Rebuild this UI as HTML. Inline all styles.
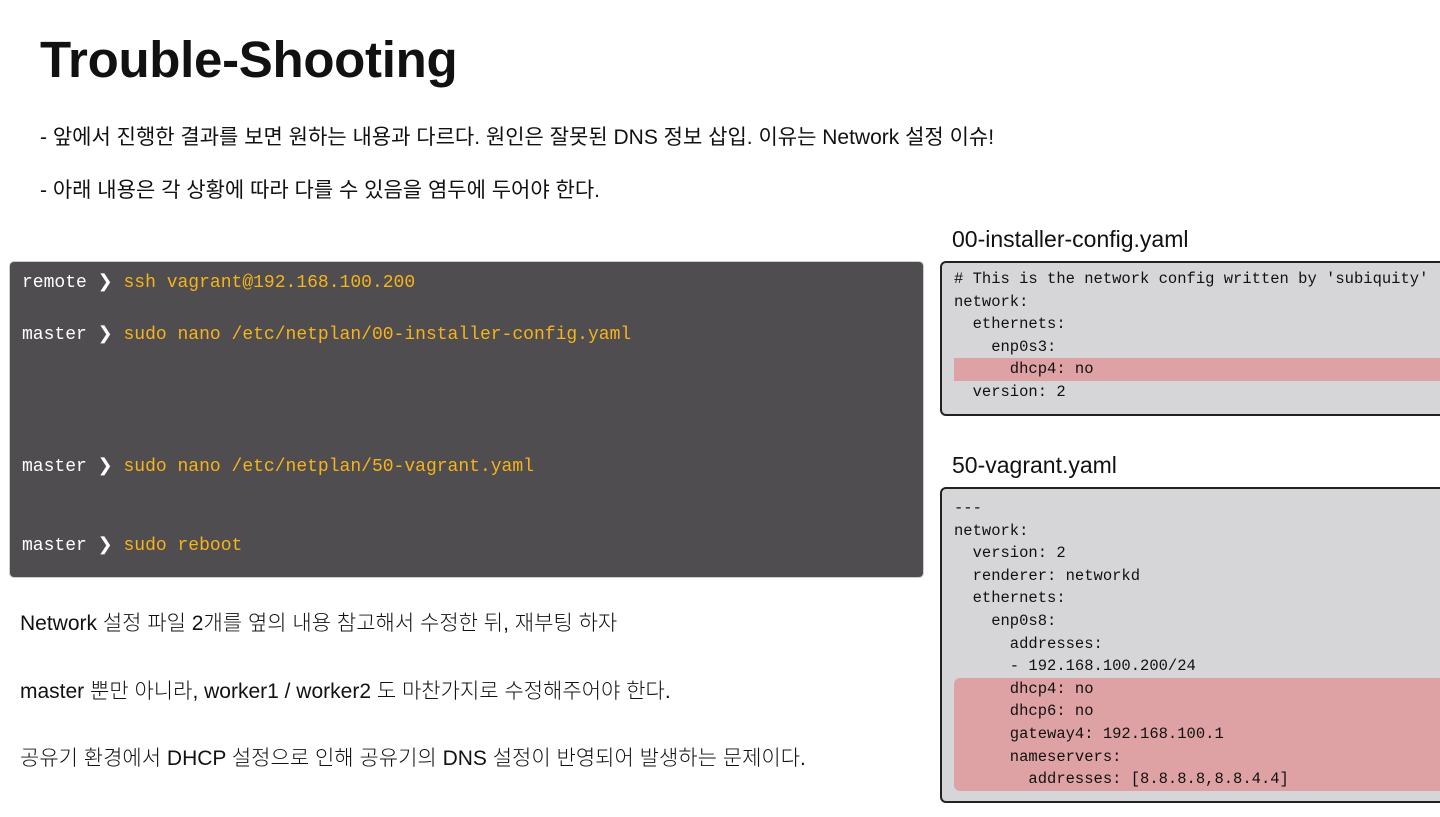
<!DOCTYPE html>
<html><head><meta charset="utf-8"><style>
body{margin:0;width:1440px;height:817px;background:#fff;position:relative;overflow:hidden;font-family:"Liberation Sans","Noto Sans CJK KR",sans-serif;color:#111}
.a{position:absolute;white-space:nowrap}
h1{position:absolute;left:40px;top:30px;margin:0;font-size:51px;font-weight:bold;letter-spacing:-0.3px}
.b{font-size:21px}
.term{position:absolute;left:9px;top:261px;width:913px;height:315px;background:#4f4d50;border-radius:5px;border:1px solid #ccc}
.t{position:absolute;left:12px;font-family:"Liberation Mono",monospace;font-size:18px;color:#fff;white-space:pre}
.t span{color:#f5b31c}
.code{position:absolute;left:940px;background:#d6d6d8;border:2px solid #222;border-radius:6px;width:520px;font-family:"Liberation Mono","DejaVu Sans Mono",monospace;font-size:15.5px;color:#111}
.code div{height:22.6px;line-height:22.6px;padding-left:12px;white-space:pre}
.code div.h{background:#dfa2a4;margin-left:12px;padding-left:0}
.hw{font-family:"Liberation Sans","Noto Sans CJK KR",sans-serif;font-size:21px;font-weight:300}
</style></head><body>
<h1>Trouble-Shooting</h1>
<div class="a b" style="left:40px;top:121px">- 앞에서 진행한 결과를 보면 원하는 내용과 다르다. 원인은 잘못된 DNS 정보 삽입. 이유는 Network 설정 이슈!</div>
<div class="a b" style="left:40px;top:174px">- 아래 내용은 각 상황에 따라 다를 수 있음을 염두에 두어야 한다.</div>
<div class="term">
<div class="t" style="top:9px">remote ❯ <span>ssh vagrant@192.168.100.200</span></div>
<div class="t" style="top:61px">master ❯ <span>sudo nano /etc/netplan/00-installer-config.yaml</span></div>
<div class="t" style="top:193px">master ❯ <span>sudo nano /etc/netplan/50-vagrant.yaml</span></div>
<div class="t" style="top:272px">master ❯ <span>sudo reboot</span></div>
</div>
<div class="a hw" style="left:952px;top:226px;font-size:23px">00-installer-config.yaml</div>
<div class="code" style="top:261px;height:146px;padding-top:5px"><div># This is the network config written by 'subiquity'</div><div>network:</div><div>  ethernets:</div><div>    enp0s3:</div><div class="h">      dhcp4: no</div><div>  version: 2</div></div>
<div class="a hw" style="left:952px;top:452px;font-size:23px">50-vagrant.yaml</div>
<div class="code" style="top:487px;height:304px;padding-top:8px"><div>---</div><div>network:</div><div>  version: 2</div><div>  renderer: networkd</div><div>  ethernets:</div><div>    enp0s8:</div><div>      addresses:</div><div>      - 192.168.100.200/24</div><div class="h" style="border-radius:6px 0 0 0">      dhcp4: no</div><div class="h">      dhcp6: no</div><div class="h">      gateway4: 192.168.100.1</div><div class="h">      nameservers:</div><div class="h" style="border-radius:0 0 0 6px">        addresses: [8.8.8.8,8.8.4.4]</div></div>
<div class="a hw" style="left:20px;top:607px">Network 설정 파일 2개를 옆의 내용 참고해서 수정한 뒤, 재부팅 하자</div>
<div class="a hw" style="left:20px;top:675px">master 뿐만 아니라, worker1 / worker2 도 마찬가지로 수정해주어야 한다.</div>
<div class="a hw" style="left:20px;top:742px">공유기 환경에서 DHCP 설정으로 인해 공유기의 DNS 설정이 반영되어 발생하는 문제이다.</div>
</body></html>
